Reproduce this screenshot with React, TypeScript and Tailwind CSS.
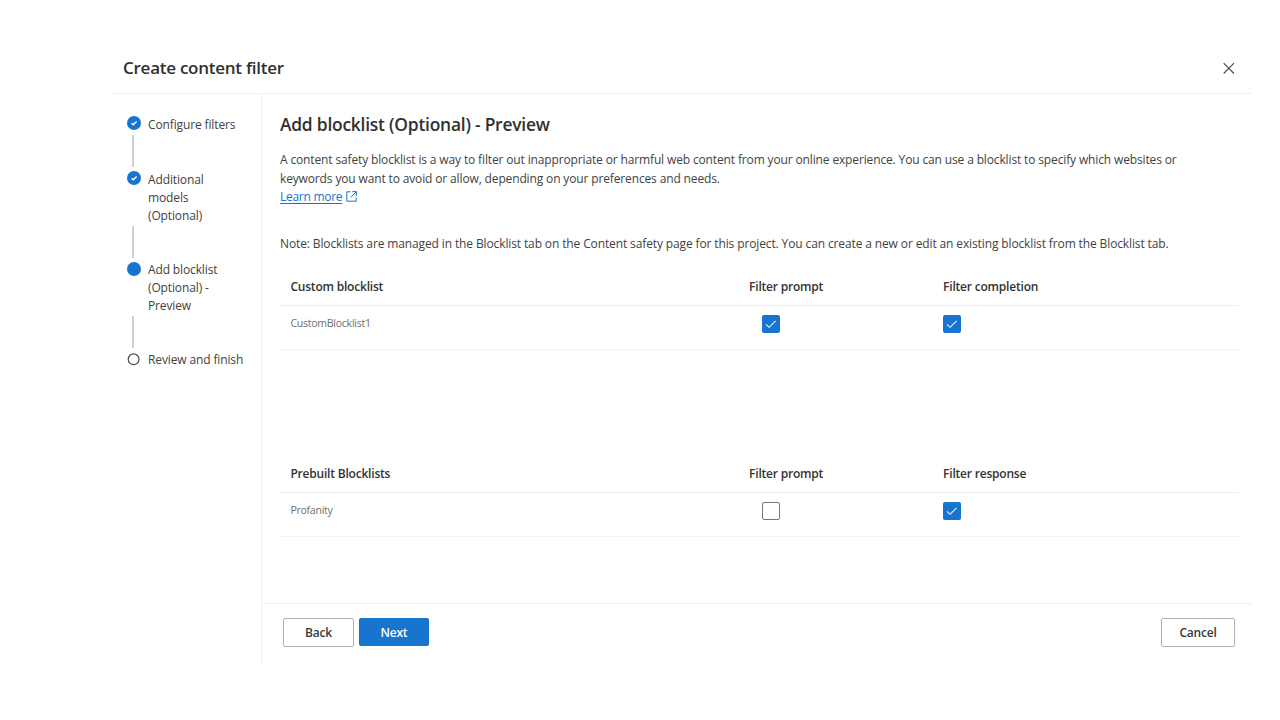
import React from "react";

function CheckDot() {
  return (
    <svg width="14" height="14" viewBox="0 0 14 14" className="block">
      <circle cx="7" cy="7" r="7" fill="#1775cf" />
      <path d="M4.6 7.2 6.3 8.8 9.6 5.4" fill="none" stroke="#fff" strokeWidth="1.4" />
    </svg>
  );
}

function ActiveDot() {
  return <div className="mt-px size-[14px] rounded-full bg-[#1775cf]" />;
}

function EmptyDot() {
  return (
    <svg width="14" height="14" viewBox="0 0 14 14" className="mt-px block">
      <circle cx="6.6" cy="7.3" r="5.4" fill="#fff" stroke="#4a4a4a" strokeWidth="1.2" />
    </svg>
  );
}

function Step({ icon, lines, last }: { icon: React.ReactNode; lines: string[]; last?: boolean }) {
  return (
    <div>
      <div className="flex">
        <div className="flex w-[21px] shrink-0">{icon}</div>
        <div className="text-[12px] leading-[18px] tracking-[-0.13px] whitespace-nowrap">
          {lines.map((l) => (
            <div key={l}>{l}</div>
          ))}
        </div>
      </div>
      {!last && <div className={`mt-px ml-[5px] h-[32px] w-[2px] bg-[#d0d0d0] ${lines.length === 1 ? "mb-[4px]" : "mb-[3px]"}`} />}
    </div>
  );
}

function Checkbox({ checked }: { checked: boolean }) {
  if (!checked) {
    return <div className="size-[18px] rounded-[2px] border border-[#767676] bg-white" />;
  }
  return (
    <div className="flex size-[18px] items-center justify-center rounded-[2px] bg-[#1775cf]">
      <svg width="18" height="18" viewBox="0 0 18 18">
        <path d="M4 9.4 7.1 12.3 13.6 5.9" fill="none" stroke="#e8f3ff" strokeWidth="1.1" />
      </svg>
    </div>
  );
}

function Blocklist({ title, last, name, prompt, completion }: { title: string; last: string; name: string; prompt: boolean; completion: boolean }) {
  return (
    <div className="w-[959px]">
      <div className="grid h-[38px] grid-cols-[458.7px_194px_1fr] border-b border-[#ededed] pl-[10.4px] text-[12px] leading-[38px] font-semibold tracking-[-0.2px] text-[#333]">
        <div>{title}</div>
        <div>Filter prompt</div>
        <div>{last}</div>
      </div>
      <div className="grid h-[44.4px] grid-cols-[472px_180.8px_1fr] border-b border-[#f3f3f3] pt-[9px] pl-[10.4px]">
        <div className="-mt-px text-[10.6px] leading-[18px] tracking-[-0.29px] text-[#707070]">{name}</div>
        <Checkbox checked={prompt} />
        <Checkbox checked={completion} />
      </div>
    </div>
  );
}

export default function App() {
  return (
    <div className="h-[720px] w-[1280px] overflow-hidden bg-white pt-[43px] pl-[113px] font-['Open_Sans',sans-serif] text-[#424242]">
      <div className="flex h-[621px] w-[1139px] flex-col">
        <header className="flex h-[51px] shrink-0 items-center justify-between border-b border-[#efefef] pr-[17px] pl-[10px]">
          <h1 className="text-[17px] font-semibold tracking-[-0.26px] text-[#303030]">Create content filter</h1>
          <svg width="13" height="13" viewBox="0 0 13 13">
            <path d="M1.7 1.2 12 11.5M12 1.2 1.7 11.5" fill="none" stroke="#484848" strokeWidth="1.1" />
          </svg>
        </header>
        <div className="flex flex-1">
          <nav className="flex w-[149.4px] shrink-0 flex-col border-r border-[#f0f0f0] pt-[22px] pl-[14px]">
            <Step icon={<CheckDot />} lines={["Configure filters"]} />
            <Step icon={<CheckDot />} lines={["Additional", "models", "(Optional)"]} />
            <Step icon={<ActiveDot />} lines={["Add blocklist", "(Optional) -", "Preview"]} />
            <Step icon={<EmptyDot />} lines={["Review and finish"]} last />
          </nav>
          <main className="flex flex-1 flex-col">
            <div className="h-[509px] pt-[18px] pl-[17.6px]">
              <h2 className="text-[17.4px] leading-[24px] font-semibold tracking-[-0.22px] text-[#303030]">Add blocklist (Optional) - Preview</h2>
              <div className="mt-[15.3px] text-[12px] leading-[18.4px] whitespace-nowrap">
                <p className="tracking-[-0.139px]">A content safety blocklist is a way to filter out inappropriate or harmful web content from your online experience. You can use a blocklist to specify which websites or</p>
                <p className="tracking-[-0.14px]">keywords you want to avoid or allow, depending on your preferences and needs.</p>
                <a className="flex items-center gap-[4px] text-[#1775cf]">
                  <span className="tracking-[-0.27px] underline underline-offset-2">Learn more</span>
                  <svg width="11" height="11" viewBox="0 0 11 11" fill="none" stroke="#1775cf" strokeWidth="1" className="-mt-[2px]">
                    <path d="M4.5.8H.8v9.4h9.4V6.5M6.3.6h4.1v4.1M10.2.8 4.6 6.4" />
                  </svg>
                </a>
                <p className="mt-[28.2px] tracking-[-0.124px]">Note: Blocklists are managed in the Blocklist tab on the Content safety page for this project. You can create a new or edit an existing blocklist from the Blocklist tab.</p>
              </div>
              <div className="mt-[14.5px]">
                <Blocklist title="Custom blocklist" last="Filter completion" name="CustomBlocklist1" prompt completion />
              </div>
              <div className="mt-[105px]">
                <Blocklist title="Prebuilt Blocklists" last="Filter response" name="Profanity" prompt={false} completion />
              </div>
            </div>
            <footer className="flex flex-1 items-start justify-between border-t border-[#efefef] pt-[14px] pr-[17px] pl-[20.6px] text-[12px] font-semibold tracking-[-0.2px]">
              <div className="flex gap-[5px]">
                <button className="h-[29px] w-[71px] rounded-[2px] border border-[#b0b0b0] pt-px text-[#383838]">Back</button>
                <button className="h-[28px] w-[70px] rounded-[2px] bg-[#1775cf] pt-[2px] text-white">Next</button>
              </div>
              <button className="h-[29px] w-[74px] rounded-[2px] border border-[#b0b0b0] pt-px text-[#383838]">Cancel</button>
            </footer>
          </main>
        </div>
      </div>
    </div>
  );
}
